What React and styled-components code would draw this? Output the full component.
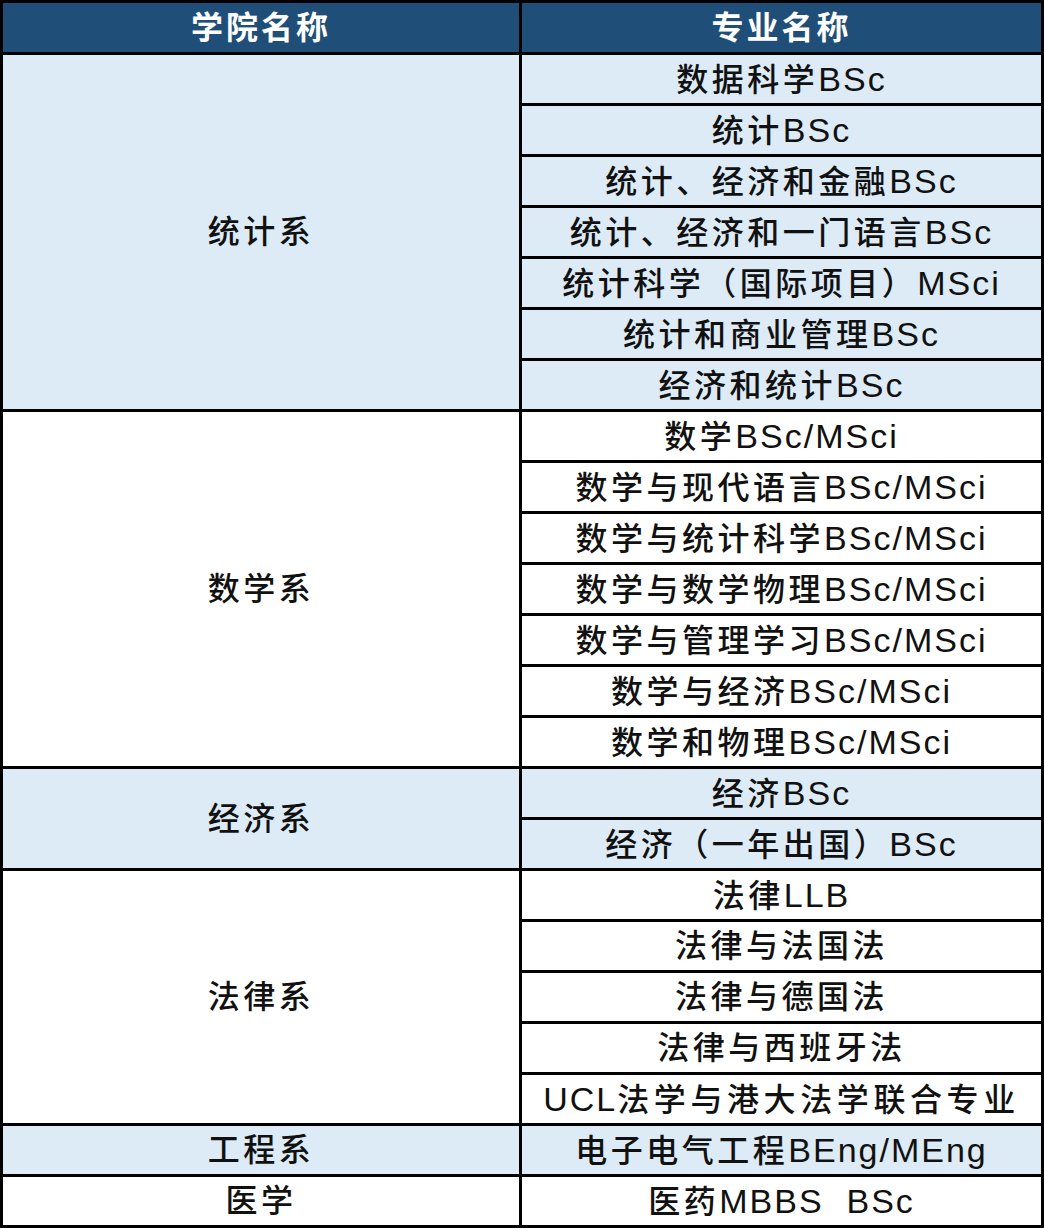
import React from "react";
import styled, { createGlobalStyle } from "styled-components";

const Global = createGlobalStyle`
  html, body { margin: 0; padding: 0; background: #ffffff; }
  body { font-family: "Liberation Sans", "Noto Sans CJK SC", sans-serif; }
`;

const Grid = styled.div`
  display: grid;
  grid-template-columns: 516px 519px;
  grid-template-rows: 49px repeat(23, 48px);
  gap: 3px;
  padding: 3px;
  width: 1044px;
  box-sizing: border-box;
  background: #000;
`;

const Cell = styled.div`
  display: flex;
  align-items: center;
  justify-content: center;
  box-sizing: border-box;
  padding-top: 1px;
  background: ${(p) => (p.$tint ? "#ddebf7" : "#ffffff")};
  color: #111;
  font-family: "Liberation Sans", "Noto Sans CJK SC", sans-serif;
  font-size: 32px;
  font-weight: 500;
  letter-spacing: ${(p) => (p.$wide ? "4.6px" : "3.5px")};
  white-space: pre;
  grid-column: ${(p) => p.$col};
  grid-row: ${(p) => p.$row} / span ${(p) => p.$span || 1};
`;

const HeadCell = styled(Cell)`
  background: #1f4e79;
  color: #ffffff;
  font-weight: 700;
  letter-spacing: 3px;
`;

const Label = styled.span`
  display: block;
  line-height: 1.2;
`;

const Latin = styled.span`
  font-family: "Liberation Sans", Arial, sans-serif;
  font-size: 34px;
  font-weight: 400;
  letter-spacing: 2px;
`;

const groups = [
  {
    name: "统计系",
    tint: true,
    majors: [
      "数据科学BSc",
      "统计BSc",
      "统计、经济和金融BSc",
      "统计、经济和一门语言BSc",
      "统计科学（国际项目）MSci",
      "统计和商业管理BSc",
      "经济和统计BSc",
    ],
  },
  {
    name: "数学系",
    tint: false,
    majors: [
      "数学BSc/MSci",
      "数学与现代语言BSc/MSci",
      "数学与统计科学BSc/MSci",
      "数学与数学物理BSc/MSci",
      "数学与管理学习BSc/MSci",
      "数学与经济BSc/MSci",
      "数学和物理BSc/MSci",
    ],
  },
  { name: "经济系", tint: true, majors: ["经济BSc", "经济（一年出国）BSc"] },
  {
    name: "法律系",
    tint: false,
    majors: [
      "法律LLB",
      "法律与法国法",
      "法律与德国法",
      "法律与西班牙法",
      "UCL法学与港大法学联合专业",
    ],
  },
  { name: "工程系", tint: true, majors: ["电子电气工程BEng/MEng"] },
  { name: "医学", tint: false, majors: ["医药MBBS  BSc"] },
];

function Mixed({ text }) {
  const parts = text.split(/([A-Za-z/ ]+)/).filter(Boolean);
  return (
    <Label>
      {parts.map((p, i) =>
        /^[A-Za-z/ ]+$/.test(p) ? (
          <Latin key={i}>{p}</Latin>
        ) : (
          <React.Fragment key={i}>{p}</React.Fragment>
        )
      )}
    </Label>
  );
}

export default function App() {
  let row = 2;
  const cells = [];
  groups.forEach((g) => {
    cells.push(
      <Cell key={g.name} $col={1} $row={row} $span={g.majors.length} $tint={g.tint}>
        <Label>{g.name}</Label>
      </Cell>
    );
    g.majors.forEach((m, i) => {
      const wide = m.startsWith("UCL");
      cells.push(
        <Cell key={g.name + i} $col={2} $row={row + i} $tint={g.tint} $wide={wide}>
          <Mixed text={m} />
        </Cell>
      );
    });
    row += g.majors.length;
  });
  return (
    <>
      <Global />
      <Grid>
        <HeadCell $col={1} $row={1}>
          <Label>学院名称</Label>
        </HeadCell>
        <HeadCell $col={2} $row={1}>
          <Label>专业名称</Label>
        </HeadCell>
        {cells}
      </Grid>
    </>
  );
}
